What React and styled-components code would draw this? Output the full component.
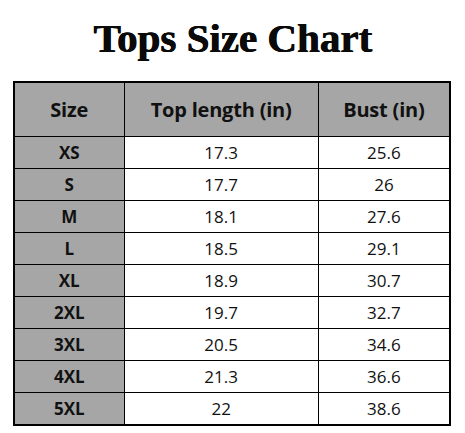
import styled, { createGlobalStyle } from "styled-components";

const GlobalStyle = createGlobalStyle`
	html, body {
		margin: 0;
		padding: 0;
		background: #fff;
	}
`;

const Page = styled.div`
	width: 465px;
	height: 433px;
	display: flex;
	flex-direction: column;
	align-items: center;
	overflow: hidden;
`;

const Title = styled.h1`
	margin: 10px 0 0;
	height: 71px;
	font-family: "Liberation Serif", "DejaVu Serif", serif;
	font-weight: 700;
	font-size: 41px;
	line-height: 56px;
	letter-spacing: 0;
	color: #0a0a0a;
	text-shadow: 0.8px 0 0 #0a0a0a, 0.4px 0.3px 0 #0a0a0a;
`;

const Table = styled.table`
	margin-left: 13px;
	align-self: flex-start;
	width: 438px;
	border-collapse: collapse;
	border: 2px solid #000;
	font-family: "Open Sans", "Noto Sans", sans-serif;
	color: #111;
`;

const HeadCell = styled.th`
	height: 53px;
	padding: 0;
	background: #a6a6a6;
	border: 1px solid #000;
	font-size: 20px;
	font-weight: 700;
	letter-spacing: -0.2px;
	text-align: center;
	width: ${(props) => props.$w}px;
`;

const SizeCell = styled.td`
	height: 31px;
	padding: 0;
	background: #a6a6a6;
	border: 1px solid #000;
	font-size: 17px;
	font-weight: 700;
	text-align: center;
`;

const ValueCell = styled.td`
	height: 31px;
	padding: 0;
	background: #fff;
	border: 1px solid #000;
	font-size: 17px;
	font-weight: 400;
	text-align: center;
`;

const rows = [
	["XS", "17.3", "25.6"],
	["S", "17.7", "26"],
	["M", "18.1", "27.6"],
	["L", "18.5", "29.1"],
	["XL", "18.9", "30.7"],
	["2XL", "19.7", "32.7"],
	["3XL", "20.5", "34.6"],
	["4XL", "21.3", "36.6"],
	["5XL", "22", "38.6"],
];

const App = () => {
	return (
		<Page>
			<GlobalStyle />
			<Title>Tops Size Chart</Title>
			<Table>
				<thead>
					<tr>
						<HeadCell $w={110}>Size</HeadCell>
						<HeadCell $w={196}>Top length (in)</HeadCell>
						<HeadCell $w={132}>Bust (in)</HeadCell>
					</tr>
				</thead>
				<tbody>
					{rows.map((row) => (
						<tr key={row[0]}>
							<SizeCell>{row[0]}</SizeCell>
							<ValueCell>{row[1]}</ValueCell>
							<ValueCell>{row[2]}</ValueCell>
						</tr>
					))}
				</tbody>
			</Table>
		</Page>
	);
};

export default App;
